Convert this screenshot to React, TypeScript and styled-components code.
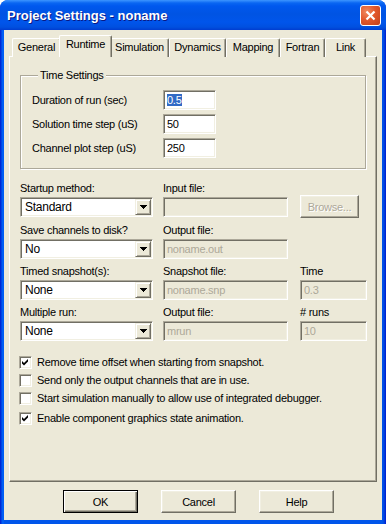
import styled, { createGlobalStyle } from "styled-components";

const GlobalStyle = createGlobalStyle`
  html, body {
    margin: 0;
    padding: 0;
    background: #ffffff;
  }
  body {
    font-family: "Liberation Sans", Arial, sans-serif;
    font-size: 11px;
    letter-spacing: -0.25px;
    color: #000;
  }
  * {
    box-sizing: border-box;
  }
`;

const tabs = [
  { name: "General", w: 49 },
  { name: "Runtime", w: 49 },
  { name: "Simulation", w: 59 },
  { name: "Dynamics", w: 57 },
  { name: "Mapping", w: 54 },
  { name: "Fortran", w: 45 },
  { name: "Link", w: 41 },
];

const timeRows = [
  { label: "Duration of run (sec)", value: "0.5", selected: true },
  { label: "Solution time step (uS)", value: "50" },
  { label: "Channel plot step (uS)", value: "250" },
];

const options = [
  { label: "Remove time offset when starting from snapshot.", checked: true },
  { label: "Send only the output channels that are in use.", checked: false },
  { label: "Start simulation manually to allow use of integrated debugger.", checked: false },
  { label: "Enable component graphics state animation.", checked: true },
];

const DropArrow = () => (
  <svg width="7" height="4" viewBox="0 0 7 4" shapeRendering="crispEdges">
    <polygon points="0,0 7,0 3.5,4" fill="#000" />
  </svg>
);

const Combo = ({ value }: { value: string }) => (
  <ComboBox>
    <ComboValue>{value}</ComboValue>
    <DropButton>
      <DropArrow />
    </DropButton>
  </ComboBox>
);

const Check = ({ checked }: { checked: boolean }) => (
  <CheckBox>
    {checked && (
      <svg width="7" height="7" viewBox="0 0 7 7">
        <polygon points="0,2 2,4 6,0 6,2.6 2,6.6 0,4.6" fill="#000" />
      </svg>
    )}
  </CheckBox>
);

const App = () => {
  return (
    <>
      <GlobalStyle />
      <Window>
        <TitleBar>
          <Title>Project Settings - noname</Title>
          <CloseButton>
            <svg width="11" height="11" viewBox="0 0 11 11">
              <path d="M1.5 1.5 L9.5 9.5 M9.5 1.5 L1.5 9.5" stroke="#fff" strokeWidth="2.2" />
            </svg>
          </CloseButton>
        </TitleBar>
        <Body>
          <TabRow>
            {tabs.map((t) => (
              <Tab key={t.name} $w={t.w} $active={t.name === "Runtime"}>
                {t.name}
              </Tab>
            ))}
          </TabRow>
          <Panel>
            <GroupBox>
              <Legend>Time Settings</Legend>
              <TimeGrid>
                {timeRows.map((r) => (
                  <TimeRow key={r.label}>
                    <span>{r.label}</span>
                    <TextField>
                      {r.selected ? <Selection>{r.value}</Selection> : r.value}
                    </TextField>
                  </TimeRow>
                ))}
              </TimeGrid>
            </GroupBox>

            <FieldGrid>
              <Cell>
                <Label>Startup method:</Label>
                <Combo value="Standard" />
              </Cell>
              <Cell>
                <Label>Input file:</Label>
                <TextField $disabled />
              </Cell>
              <Cell>
                <Label />
                <Button $disabled $w={59}>
                  Browse...
                </Button>
              </Cell>

              <Cell>
                <Label>Save channels to disk?</Label>
                <Combo value="No" />
              </Cell>
              <Cell>
                <Label>Output file:</Label>
                <TextField $disabled>noname.out</TextField>
              </Cell>
              <Cell />

              <Cell>
                <Label>Timed snapshot(s):</Label>
                <Combo value="None" />
              </Cell>
              <Cell>
                <Label>Snapshot file:</Label>
                <TextField $disabled>noname.snp</TextField>
              </Cell>
              <Cell>
                <Label>Time</Label>
                <TextField $disabled>0.3</TextField>
              </Cell>

              <Cell>
                <Label>Multiple run:</Label>
                <Combo value="None" />
              </Cell>
              <Cell>
                <Label>Output file:</Label>
                <TextField $disabled>mrun</TextField>
              </Cell>
              <Cell>
                <Label># runs</Label>
                <TextField $disabled>10</TextField>
              </Cell>
            </FieldGrid>

            <CheckList>
              {options.map((o, i) => (
                <CheckRow key={o.label} $spaced={i === options.length - 1}>
                  <Check checked={o.checked} />
                  <span>{o.label}</span>
                </CheckRow>
              ))}
            </CheckList>
          </Panel>
          <Footer>
            <Button $default>OK</Button>
            <Button>Cancel</Button>
            <Button>Help</Button>
          </Footer>
        </Body>
      </Window>
    </>
  );
};

export default App;

const Window = styled.div`
  width: 386px;
  height: 524px;
  display: flex;
  flex-direction: column;
  border-radius: 8px 8px 0 0;
  overflow: hidden;
  background: linear-gradient(to right, #0019cf 0px, #0055ea 2px, #0066ff 3px, #0055ea 4px, #0055ea 382px, #0046e0 384px, #0019cf 386px);
`;

const TitleBar = styled.div`
  height: 30px;
  flex-shrink: 0;
  display: flex;
  align-items: center;
  justify-content: space-between;
  padding: 1px 5px 0 7px;
  background: linear-gradient(
    to bottom,
    #3d95ff 0px,
    #0a66f2 3px,
    #0058ee 6px,
    #0054e3 14px,
    #0055eb 22px,
    #0050e0 27px,
    #003dd0 30px
  );
`;

const Title = styled.span`
  color: #fff;
  font-family: "Liberation Sans", Arial, sans-serif;
  font-weight: 700;
  font-size: 13px;
  letter-spacing: 0;
  text-shadow: 1px 1px 0 #0a1883;
`;

const CloseButton = styled.div`
  width: 21px;
  height: 21px;
  border: 1px solid #fff;
  border-radius: 3px;
  display: flex;
  align-items: center;
  justify-content: center;
  background: radial-gradient(circle at 30% 30%, #f08a60 0%, #e2582c 45%, #c3401a 100%);
`;

const Body = styled.div`
  flex: 1;
  margin: 0 4px 4px;
  background: #ece9d8;
  padding: 6px 5px 6px;
  display: flex;
  flex-direction: column;
`;

const TabRow = styled.div`
  display: flex;
  align-items: flex-end;
  height: 21px;
  padding-left: 3px;
  position: relative;
  z-index: 1;
  margin-bottom: -1px;
`;

const Tab = styled.div<{ $w: number; $active?: boolean }>`
  width: ${({ $w, $active }) => ($active ? $w + 4 : $w)}px;
  height: ${({ $active }) => ($active ? 22 : 19)}px;
  margin: 0 ${({ $active }) => ($active ? -2 : 0)}px;
  position: relative;
  z-index: ${({ $active }) => ($active ? 2 : 1)};
  background: #ece9d8;
  border-top: 1px solid #fff;
  border-left: 1px solid #fff;
  border-right: 1px solid #716f64;
  box-shadow: inset -1px 0 0 #aca899;
  border-radius: 2px 2px 0 0;
  display: flex;
  justify-content: center;
  padding-top: 2px;
  line-height: 13px;
  white-space: nowrap;
`;

const Panel = styled.div`
  height: 426px;
  flex-shrink: 0;
  border: 1px solid;
  border-color: #fff #716f64 #716f64 #fff;
  box-shadow: inset -1px -1px 0 #aca899;
  padding: 12px 10px 0 10px;
  display: flex;
  flex-direction: column;
`;

const GroupBox = styled.fieldset`
  margin: 0;
  padding: 8px 11px 10px;
  border: 1px solid #aca899;
  box-shadow: inset 1px 1px 0 #fff, 1px 1px 0 #fff;
  min-width: 0;
`;

const Legend = styled.legend`
  margin-left: 6px;
  padding: 0 2px;
  line-height: 13px;
  background: #ece9d8;
`;

const TimeGrid = styled.div`
  display: flex;
  flex-direction: column;
  gap: 4px;
`;

const TimeRow = styled.div`
  display: grid;
  grid-template-columns: 131px 53px;
  align-items: center;
`;

const TextField = styled.div<{ $disabled?: boolean }>`
  height: 20px;
  border: 1px solid;
  border-color: #aca899 #fff #fff #aca899;
  box-shadow: inset 1px 1px 0 #716f64, inset -1px -1px 0 #f1efe2;
  background: ${({ $disabled }) => ($disabled ? "#ece9d8" : "#fff")};
  color: ${({ $disabled }) => ($disabled ? "#aca899" : "#000")};
  padding: 0 3px;
  line-height: 18px;
  white-space: nowrap;
  overflow: hidden;
`;

const Selection = styled.span`
  background: #316ac5;
  color: #fff;
`;

const FieldGrid = styled.div`
  margin-top: 12px;
  display: grid;
  grid-template-columns: 133px 127px 67px;
  column-gap: 10px;
  row-gap: 5px;

  & > div:nth-child(3n + 2) > div:last-child {
    width: 125px;
  }
`;

const Cell = styled.div`
  display: flex;
  flex-direction: column;
`;

const Label = styled.div`
  height: 14px;
  line-height: 14px;
  margin-bottom: 2px;
  white-space: nowrap;
`;

const ComboBox = styled.div`
  height: 20px;
  border: 1px solid;
  border-color: #aca899 #fff #fff #aca899;
  box-shadow: inset 1px 1px 0 #716f64, inset -1px -1px 0 #f1efe2;
  background: #fff;
  display: flex;
  align-items: stretch;
  padding: 1px;
`;

const ComboValue = styled.div`
  flex: 1;
  padding-left: 3px;
  line-height: 16px;
  font-size: 12px;
`;

const DropButton = styled.div`
  width: 16px;
  border: 1px solid;
  border-color: #f1efe2 #716f64 #716f64 #f1efe2;
  box-shadow: inset 1px 1px 0 #fff, inset -1px -1px 0 #aca899;
  background: #ece9d8;
  display: flex;
  align-items: center;
  justify-content: center;
`;

const Button = styled.div<{ $default?: boolean; $disabled?: boolean; $w?: number }>`
  width: ${({ $w }) => $w ?? 75}px;
  height: 23px;
  margin-top: ${({ $disabled }) => ($disabled ? -2 : 0)}px;
  border: 1px solid;
  border-color: ${({ $default }) => ($default ? "#000" : "#fff #716f64 #716f64 #fff")};
  box-shadow: ${({ $default }) =>
    $default
      ? "inset 1px 1px 0 #fff, inset -1px -1px 0 #716f64, inset -2px -2px 0 #aca899"
      : "inset -1px -1px 0 #aca899, inset 1px 1px 0 #f1efe2"};
  background: #ece9d8;
  color: ${({ $disabled }) => ($disabled ? "#aca899" : "#000")};
  text-shadow: ${({ $disabled }) => ($disabled ? "1px 1px 0 #fff" : "none")};
  display: flex;
  align-items: center;
  justify-content: center;
  font-size: 11px;
`;

const CheckList = styled.div`
  margin-top: 12px;
  margin-left: -1px;
  display: flex;
  flex-direction: column;
`;

const CheckRow = styled.div<{ $spaced?: boolean }>`
  height: 18px;
  margin-top: ${({ $spaced }) => ($spaced ? 2 : 0)}px;
  display: flex;
  align-items: center;
  gap: 5px;
  white-space: nowrap;
`;

const CheckBox = styled.div`
  width: 13px;
  height: 13px;
  flex-shrink: 0;
  border: 1px solid;
  border-color: #aca899 #fff #fff #aca899;
  box-shadow: inset 1px 1px 0 #716f64, inset -1px -1px 0 #f1efe2;
  background: #fff;
  display: flex;
  align-items: center;
  justify-content: center;
`;

const Footer = styled.div`
  margin-top: 8px;
  display: flex;
  gap: 23px;
  padding-left: 54px;
`;
